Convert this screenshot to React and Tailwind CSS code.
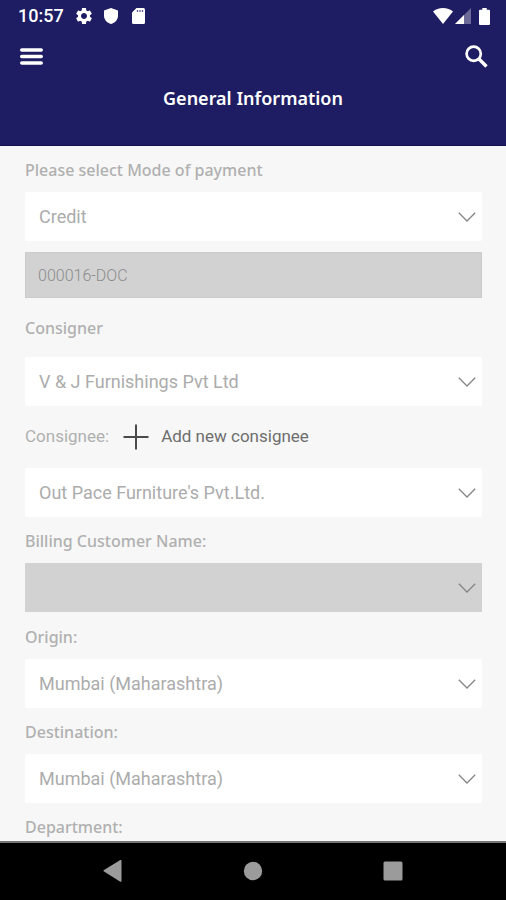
import { useState } from "react";
import { MdSettings } from "react-icons/md";

const LABEL = "font-['Noto_Sans',sans-serif] text-[16px] leading-5 font-medium text-[#b0b0b0]";

export default function App() {
  const [form, setForm] = useState({
    payment: "Credit",
    docNo: "000016-DOC",
    consigner: "V & J Furnishings Pvt Ltd",
    consignee: "Out Pace Furniture's Pvt.Ltd.",
    billing: "",
    origin: "Mumbai (Maharashtra)",
    destination: "Mumbai (Maharashtra)",
  });

  const set = (key) => (value) => setForm({ ...form, [key]: value });

  return (
    <div className="flex h-screen flex-col bg-[#f7f7f7] font-[Roboto,sans-serif]">

      {/* HEADER */}
      <header className="shrink-0 border-b border-[#14114f] bg-[#1e1c62] text-white">
        <StatusBar />

        <div className="flex h-12 items-center justify-between pr-[18px] pl-5">
          <button aria-label="Menu">
            <MenuIcon />
          </button>
          <button aria-label="Search">
            <SearchIcon />
          </button>
        </div>

        <h1 className="pt-[6px] pb-[35px] text-center font-['Noto_Sans',sans-serif] text-[18px] leading-6 font-semibold">
          General Information
        </h1>
      </header>

      {/* FORM */}
      <main className="min-h-0 flex-1 overflow-hidden pr-6 pl-[25px]">
        <form className="flex flex-col">
          <Label id="payment">Please select Mode of payment</Label>
          <Select id="payment" value={form.payment} set={set("payment")} />

          <input
            aria-label="Document number"
            value={form.docNo}
            disabled
            className="mt-[11px] h-[46px] border border-[#cbcbcb] bg-[#d2d2d2] px-3 text-[16px] font-light text-[#8c8c8c]"
          />

          <div className="pt-[6px] pb-[7px]">
            <Label id="consigner">Consigner</Label>
          </div>
          <Select id="consigner" value={form.consigner} set={set("consigner")} />

          <div className="flex h-[62px] items-center">
            <label htmlFor="consignee" className="text-[17px] text-[#b0b0b0]">
              Consignee:
            </label>
            <button type="button" className="ml-[14px] flex items-center gap-3 text-[17px] text-[#6e6e6e]">
              <PlusIcon />
              Add new consignee
            </button>
          </div>
          <Select id="consignee" value={form.consignee} set={set("consignee")} />

          <Label id="billing">Billing Customer Name:</Label>
          <Select id="billing" value={form.billing} set={set("billing")} disabled />

          <div className="pt-px">
            <Label id="origin">Origin:</Label>
          </div>
          <Select id="origin" value={form.origin} set={set("origin")} />

          <Label id="destination">Destination:</Label>
          <Select id="destination" value={form.destination} set={set("destination")} />

          <p className={`flex h-[46px] items-center pt-[2px] ${LABEL}`}>Department:</p>
        </form>
      </main>

      <NavBar />
    </div>
  );
}

// ---------------- FORM PARTS ----------------

function Label({ id, children }) {
  return (
    <label htmlFor={id} className={`flex h-[46px] items-center pt-[2px] ${LABEL}`}>
      {children}
    </label>
  );
}

function Select({ id, value, set, disabled }) {
  return (
    <div className="relative">
      <select
        id={id}
        value={value}
        disabled={disabled}
        onChange={(e) => set(e.target.value)}
        className="block h-[49px] w-full appearance-none rounded-[2px] bg-white px-[14px] text-[18px] text-[#acacac] opacity-100 disabled:rounded-none disabled:bg-[#d2d2d2]"
      >
        <option>{value}</option>
      </select>
      <svg
        viewBox="0 0 18 10"
        className="pointer-events-none absolute top-5 right-[6px] h-[10px] w-[18px] text-[#858585]"
        fill="none"
        stroke="currentColor"
        strokeWidth="1.3"
      >
        <path d="M.8.8 9 9 17.200.8" />
      </svg>
    </div>
  );
}

// ---------------- BARS ----------------

function StatusBar() {
  return (
    <div className="flex h-8 items-center justify-between pr-4 pl-[18px]">
      <div className="flex items-center">
        <span className="text-[18px] leading-6 font-medium">10:57</span>
        <MdSettings className="ml-[10px] size-[20px]" />
        <svg viewBox="0 0 14 16" className="ml-[10px] h-4 w-[14px]" fill="currentColor">
          <path d="M7 0 14 2.600v5.200C14 11.700 11 15 7 16 3 15 0 11.700 0 7.800V2.600Z" />
        </svg>
        <svg viewBox="0 0 13 16" className="ml-[14px] h-4 w-[13px]">
          <path d="M4.500 0H11.500A1.500 1.500 0 0 1 13 1.500v13a1.500 1.500 0 0 1-1.500 1.500h-10A1.500 1.500 0 0 1 0 14.500V4.500Z" fill="currentColor" />
          <path d="M5.500 2v2M8 2v2M10.500 2v2" stroke="#1e1c62" strokeWidth="1.300" opacity=".7" />
        </svg>
      </div>

      <div className="flex items-center">
        <svg viewBox="0 0 20 16" className="h-4 w-5" fill="currentColor">
          <path d="M10 16 0 3.500C2.500 1.300 6 0 10 0s7.500 1.300 10 3.500Z" />
        </svg>
        <svg viewBox="0 0 16 16" className="ml-[2px] size-4" fill="currentColor">
          <path d="M16 0v16H0Z" opacity=".35" />
          <path d="M9 7v9H0Z" />
        </svg>
        <svg viewBox="0 0 11 17" className="ml-2 h-[17px] w-[11px]" fill="currentColor">
          <path d="M3.300 0h4.400v1.700h2.300a1 1 0 0 1 1 1V16a1 1 0 0 1-1 1H1a1 1 0 0 1-1-1V2.700a1 1 0 0 1 1-1h2.300Z" />
        </svg>
      </div>
    </div>
  );
}

function NavBar() {
  return (
    <nav className="flex h-[59px] shrink-0 items-center justify-center gap-[120px] border-t-2 border-[#777777] bg-black pb-[2px] text-[#9b9b9b]">
      <button aria-label="Back">
        <svg viewBox="0 0 20 22" className="h-[22px] w-5" fill="currentColor">
          <path d="M18.500.600v20.400a.8.8 0 0 1-1.200.700L1 11.600a.9.9 0 0 1 0-1.500L17.300.100a.8.8 0 0 1 1.200.500Z" />
        </svg>
      </button>
      <button aria-label="Home">
        <svg viewBox="0 0 20 20" className="size-5" fill="currentColor">
          <circle cx="10" cy="10" r="9.200" />
        </svg>
      </button>
      <button aria-label="Recent apps">
        <svg viewBox="0 0 20 20" className="size-5" fill="currentColor">
          <rect x=".5" y=".5" width="19" height="19" rx="1.500" />
        </svg>
      </button>
    </nav>
  );
}

// ---------------- ICONS ----------------

function MenuIcon() {
  return (
    <svg viewBox="0 0 23 17" className="h-[17px] w-[23px]" stroke="currentColor" strokeWidth="3.600" strokeLinecap="round">
      <path d="M1.800 2h19.400M1.800 8.500h19.400M1.800 15h19.400" />
    </svg>
  );
}

function SearchIcon() {
  return (
    <svg viewBox="0 0 23 23" className="size-[23px]" fill="none" stroke="currentColor" strokeWidth="2.700">
      <circle cx="8.700" cy="8.700" r="7.100" />
      <path d="M14 14 21.500 21.500" strokeWidth="3.300" />
    </svg>
  );
}

function PlusIcon() {
  return (
    <svg viewBox="0 0 26 26" className="size-[26px] text-[#4a4a4a]" stroke="currentColor" strokeWidth="2">
      <path d="M13 .5v25M.5 13h25" />
    </svg>
  );
}
